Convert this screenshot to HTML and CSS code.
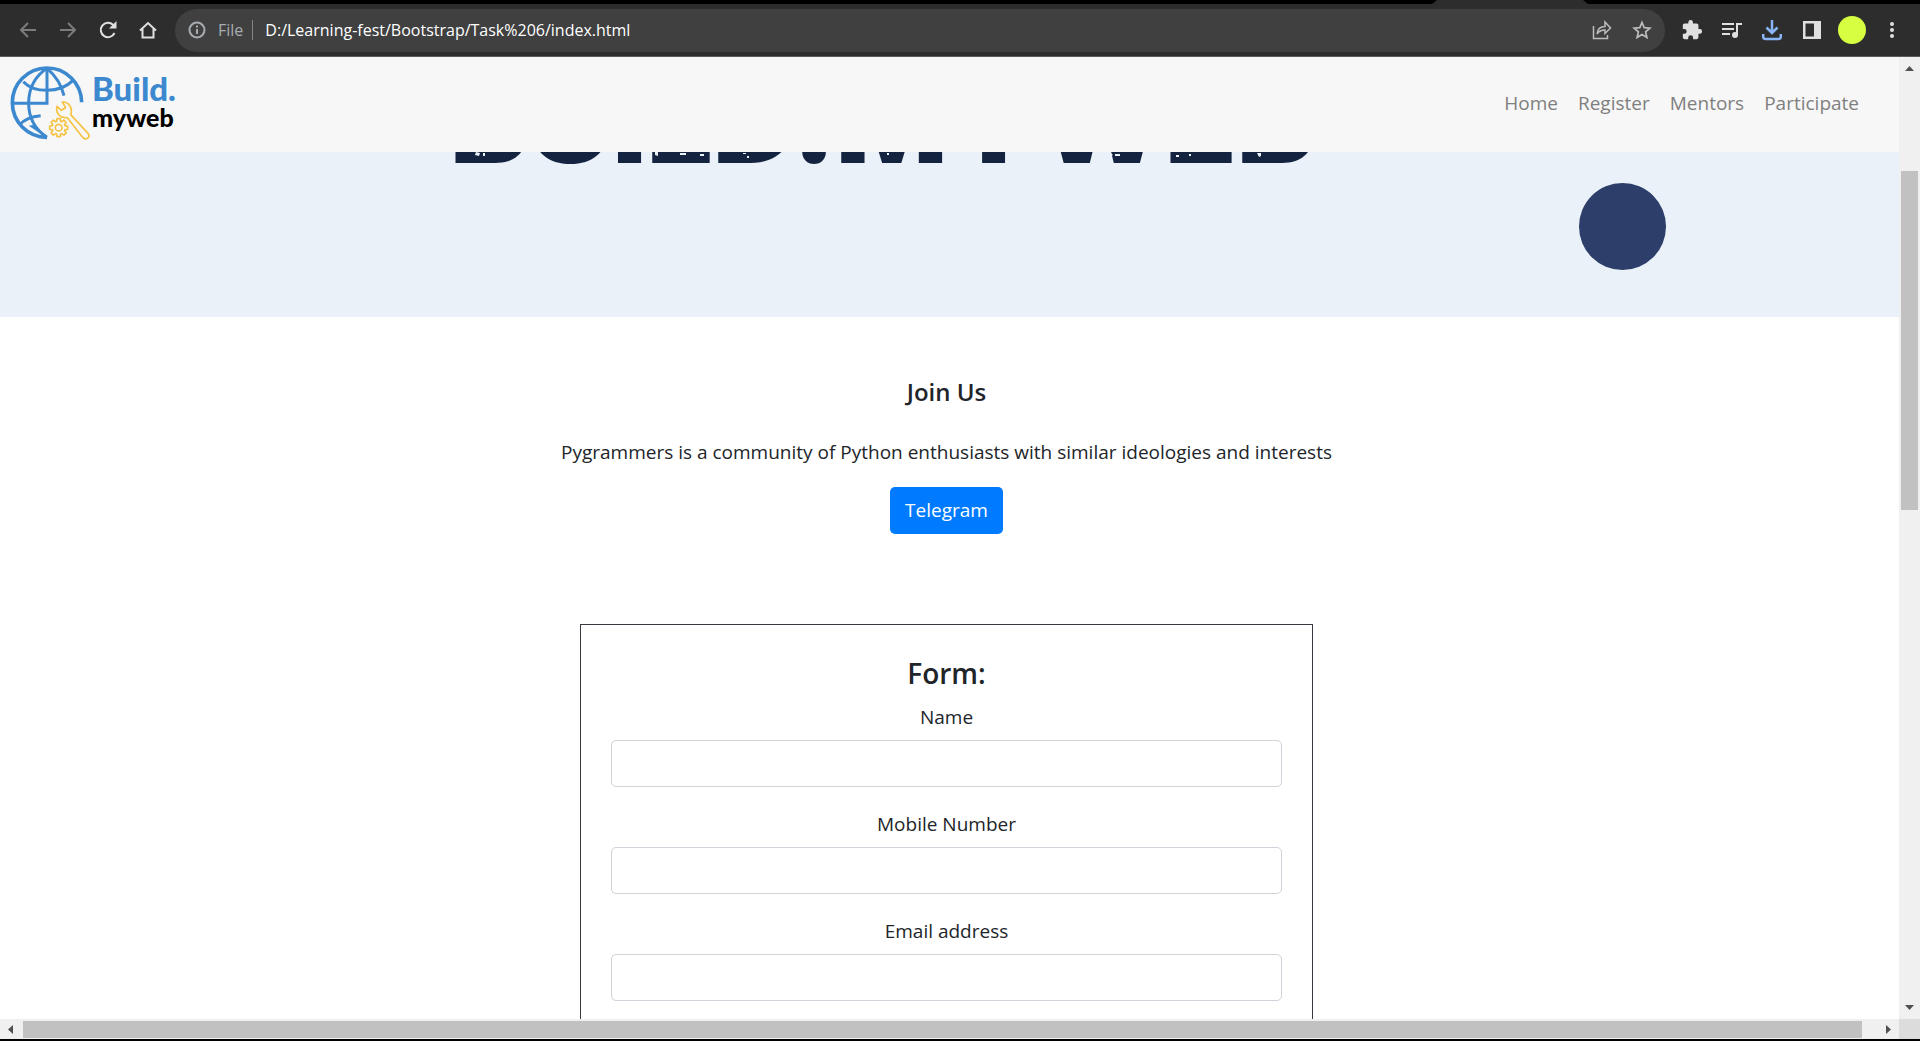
FILE: index.html
```html
<!DOCTYPE html>
<html lang="en">
<head>
<meta charset="utf-8">
<title>Build.myweb</title>
<link rel="stylesheet" href="styles.css">
</head>
<body>
<div class="window">
  <div class="tabstrip"><span class="active-tab"></span></div>
  <div class="toolbar">
    <button class="tool dim" aria-label="Back"><svg width="20" height="20" viewBox="0 0 20 20" fill="none" stroke="currentColor" stroke-width="2"><path d="M18 10H3M10 3l-7 7 7 7"/></svg></button>
    <button class="tool dim" aria-label="Forward"><svg width="20" height="20" viewBox="0 0 20 20" fill="none" stroke="currentColor" stroke-width="2"><path d="M2 10h15M10 3l7 7-7 7"/></svg></button>
    <button class="tool" aria-label="Reload"><svg width="20" height="20" viewBox="0 0 20 20" fill="none" stroke="currentColor" stroke-width="2"><path d="M16.500 13A7.200 7.200 0 1 1 15 4.800l1.500 1.500"/><path d="M18.500 1v7.500H11z" fill="currentColor" stroke="none"/></svg></button>
    <button class="tool" aria-label="Home"><svg width="20" height="20" viewBox="0 0 20 20" fill="none" stroke="currentColor" stroke-width="2"><path d="M2 10.500L10 3l8 7.500M4.500 9v8.500h11V9"/></svg></button>
    <div class="omnibox">
      <svg class="info" width="18" height="18" viewBox="0 0 18 18" fill="none" stroke="currentColor" stroke-width="2"><circle cx="9" cy="9" r="7.500"/><path d="M9 8v5M9 4.500v2"/></svg>
      <span class="scheme">File</span>
      <input class="url" type="text" aria-label="Address" value="D:/Learning-fest/Bootstrap/Task%206/index.html">
      <button class="tool soft" aria-label="Share"><svg width="20" height="20" viewBox="0 0 20 20" fill="none" stroke="currentColor" stroke-width="1.500"><path d="M1.500 6v12.500h14V15"/><path d="M5 14c.5-5 3-7.500 8-7.500V2l5.500 6-5.500 5.500V10c-3.500 0-6 1-8 4z"/></svg></button>
      <button class="tool soft" aria-label="Bookmark"><svg width="20" height="20" viewBox="0 0 20 20" fill="none" stroke="currentColor" stroke-width="1.700"><path d="M10 2.500l2.200 5.200 5.700.5-4.300 3.700 1.300 5.600-4.900-3-4.900 3 1.300-5.600L2.100 8.200l5.700-.5z"/></svg></button>
    </div>
    <button class="tool" aria-label="Extensions"><svg width="22" height="22" viewBox="0 0 24 24" fill="currentColor"><path d="M20.500 11H19V7c0-1.100-.9-2-2-2h-4V3.500a2.500 2.500 0 0 0-5 0V5H4c-1.100 0-2 .9-2 2v3.800h1.500a2.700 2.700 0 0 1 0 5.400H2V20c0 1.100.9 2 2 2h3.800v-1.500a2.700 2.700 0 0 1 5.400 0V22H17c1.100 0 2-.9 2-2v-4h1.500a2.500 2.500 0 0 0 0-5z"/></svg></button>
    <button class="tool" aria-label="Media"><svg width="22" height="20" viewBox="0 0 22 20" fill="none" stroke="currentColor" stroke-width="2"><path d="M1 4h12M1 9h12M1 14h8M16 15V4h5"/><circle cx="14" cy="15" r="3" fill="currentColor" stroke="none"/></svg></button>
    <button class="tool blue" aria-label="Downloads"><svg width="20" height="22" viewBox="0 0 20 22" fill="none" stroke="currentColor" stroke-width="2.500"><path d="M10 1v13M4.500 8.500L10 14l5.500-5.500"/><path d="M1.200 15v3c0 1.500.5 2 2 2h13.600c1.500 0 2-.5 2-2v-3"/></svg></button>
    <button class="tool" aria-label="Side panel"><svg width="20" height="20" viewBox="0 0 20 20" fill="currentColor"><path fill-rule="evenodd" d="M1 1h18v18H1zM3.500 3.500v13H12v-13z"/></svg></button>
    <button class="tool" aria-label="Profile"><span class="avatar"></span></button>
    <button class="tool" aria-label="Menu"><svg width="20" height="20" viewBox="0 0 20 20" fill="currentColor"><circle cx="10" cy="4" r="2"/><circle cx="10" cy="10" r="2"/><circle cx="10" cy="16" r="2"/></svg></button>
  </div>

  <div class="frame">
    <div class="page">
      <nav class="navbar">
        <a class="brand" href="#">
          <svg width="82" height="76" viewBox="30 30 246 228" fill="none">
            <g stroke="#3d89d0" stroke-width="9">
              <path d="M141 247A104 104 0 1 1 245 142" stroke-width="11"/>
              <path d="M141 40C102 66 86 105 86 145c0 44 20 79 55 102"/>
              <path d="M141 40c26 22 43 48 51 82"/>
              <path d="M141 40v105H36"/>
              <path d="M70 80c32 34 110 36 148-3"/>
              <path d="M58 210c14-16 36-26 64-28"/>
              <path d="M86 212l18-3 34 38z" fill="#3d89d0" stroke="none"/>
            </g>
            <g stroke="#f6c343" stroke-width="5" stroke-linejoin="round">
              <path d="M187 141c20-1 32 18 25 38l52 56c9 12-6 22-15 13l-47-60c-22 2-36-14-31-34l13 12 13-8z"/>
              <circle cx="176" cy="218" r="10"/>
              <path transform="translate(176 218)" d="M19-6l8 1V5l-8 1-1.300 3.200 4.900 6.400-7 7-6.400-4.900L6 19l-1 8H-5l-1-8-3.200-1.300-6.400 4.900-7-7 4.900-6.400L-19 6l-8-1V-5l8-1 1.300-3.200-4.900-6.400 7-7 6.400 4.900L-6-19l1-8H5l1 8 3.200 1.300 6.400-4.900 7 7-4.900 6.400z"/>
            </g>
          </svg>
          <span class="wordmark"><span class="word-top">Build.</span><span class="word-bottom">myweb</span></span>
        </a>
        <div class="nav-links">
          <a href="#">Home</a>
          <a href="#">Register</a>
          <a href="#">Mentors</a>
          <a href="#">Participate</a>
        </div>
      </nav>

      <header class="hero">
        <span class="hero-title">BUILD.MYWEB</span>
        <svg class="hero-grain" width="860" height="12" viewBox="0 0 860 12" fill="#eaf1f9">
          <path d="M22 0l4 1-1 3-4-1zM29 1h2v3h-2zM195 1h3v3h-3zM201 0h3v4l-3-1zM226 1h6v2h-6zM246 2h4v2h-4zM289 1h3v1h-3zM293 4h2v2h-2zM372 1h3v2h-3zM379 5h2v2h-2zM420 2h2v6h-2zM433 1h2v2h-2zM650 1l6-1 3 3-4 2-5-2zM661 2h5v2h-5zM642 4h2v2h-2zM703 3h3v3h-3zM711 1h5v2h-5zM722 3h3v2h-3zM735 2h2v2h-2zM803 1h4v3l-2 1z"/>
        </svg>
        <span class="hero-dot"></span>
      </header>

      <main class="content">
        <section class="join">
          <h2>Join Us</h2>
          <p>Pygrammers is a community of Python enthusiasts with similar ideologies and interests</p>
          <button class="primary">Telegram</button>
        </section>

        <form class="card">
          <h1>Form:</h1>
          <div class="field"><label for="name">Name</label><input id="name" type="text"></div>
          <div class="field"><label for="mobile">Mobile Number</label><input id="mobile" type="tel"></div>
          <div class="field"><label for="email">Email address</label><input id="email" type="email"></div>
        </form>
      </main>
    </div>

    <div class="scroll-y">
      <svg width="21" height="20" viewBox="0 0 21 20"><path d="M6 14h9l-4.500-5z"/></svg>
      <div class="track"><div class="thumb"></div></div>
      <svg width="21" height="20" viewBox="0 0 21 20"><path d="M6 6h9l-4.500 5z"/></svg>
    </div>
    <div class="scroll-x">
      <svg width="21" height="20" viewBox="0 0 21 20"><path d="M13 6v9l-5-4.500z"/></svg>
      <div class="track"><div class="thumb"></div></div>
      <svg width="21" height="20" viewBox="0 0 21 20"><path d="M8 6v9l5-4.500z"/></svg>
    </div>
    <div class="corner"></div>
  </div>
</div>
</body>
</html>
```
FILE: styles.css
```css
* { box-sizing: border-box; }

html { overflow: hidden; }

body {
  margin: 0;
  font-family: "Open Sans", "Noto Sans", sans-serif;
  font-size: 19px;
  line-height: 30px;
  color: #212529;
}

button, input { font: inherit; margin: 0; }

.window {
  display: flex;
  flex-direction: column;
  height: 100vh;
  overflow: hidden;
  background: #fff;
  border-bottom: 2px solid #000;
}

/* Browser chrome */
.tabstrip {
  flex: none;
  display: flex;
  justify-content: flex-end;
  height: 4px;
  padding-right: 332px;
  background: #000;
}
.active-tab {
  width: 156px;
  background: #2d2d2d;
  clip-path: polygon(5px 0, 151px 0, 156px 100%, 0 100%);
}

.toolbar {
  flex: none;
  display: flex;
  align-items: center;
  height: 53px;
  padding: 0 8px;
  background: #2d2d2d;
  border-bottom: 1px solid #5a5a5a;
}
.tool {
  flex: none;
  display: flex;
  align-items: center;
  justify-content: center;
  width: 40px;
  height: 40px;
  padding: 0;
  border: 0;
  background: none;
  color: #e0e0e0;
}
.tool.dim { color: #7c7c7c; }
.tool.soft { color: #bdbdbd; }
.tool.blue { color: #8ab4f8; }
.avatar {
  width: 28px;
  height: 28px;
  border-radius: 50%;
  background: #d5ff40;
}
.omnibox {
  flex: 1;
  display: flex;
  align-items: center;
  height: 43px;
  margin: 0 7px;
  padding: 0 3px 0 13px;
  border-radius: 22px;
  background: #404040;
  color: #a8acb0;
  font-size: 16px;
}
.info { margin-right: 12px; }
.scheme {
  padding-right: 9px;
  border-right: 1px solid #80868b;
  line-height: 20px;
}
.url {
  flex: 1;
  min-width: 0;
  padding: 0 0 0 12px;
  border: 0;
  outline: 0;
  background: none;
  color: #fff;
}

/* Page area and its scrollbars */
.frame {
  flex: 1;
  min-height: 0;
  display: grid;
  grid-template-columns: 1fr 21px;
  grid-template-rows: 1fr 20px;
}
.page { min-width: 0; min-height: 0; overflow: hidden; }
.scroll-y, .scroll-x { display: flex; background: #f0f0f0; fill: #505050; }
.scroll-y { flex-direction: column; }
.scroll-y svg, .scroll-x svg { flex: none; }
.track { flex: 1; }
.thumb { background: #c1c1c1; }
.scroll-y .track { padding: 94px 2px 0; }
.scroll-y .thumb { height: 41%; }
.scroll-x .track { padding: 2px 16px 1px 2px; }
.scroll-x .thumb { height: 100%; }
.corner { background: #dcdcdc; }

.navbar {
  display: flex;
  align-items: center;
  justify-content: space-between;
  height: 95px;
  padding: 0 30px 3px 10px;
  background: #f7f7f7;
}
.brand {
  display: flex;
  align-items: center;
  text-decoration: none;
  font-family: Lato, sans-serif;
  font-weight: 900;
}
.wordmark { display: flex; flex-direction: column; line-height: 29px; }
.word-top { color: #3d89d0; font-size: 33px; }
.word-bottom { color: #000; font-size: 25px; }
.nav-links { display: flex; }
.nav-links a { padding: 0 10px; color: #7f7f7f; text-decoration: none; }

.hero {
  position: relative;
  height: 165px;
  overflow: hidden;
  background: #eaf1f9;
}
.hero-title {
  position: absolute;
  left: 450px;
  bottom: 153px;
  color: #14233f;
  font-family: Inter, sans-serif;
  font-size: 117px;
  font-weight: 900;
  line-height: 86px;
}
.hero-grain {
  position: absolute;
  left: 454px;
  top: 0;
}
.hero-dot {
  position: absolute;
  right: 233px;
  top: 31px;
  width: 87px;
  height: 87px;
  border-radius: 50%;
  background: #2c3e69;
}

.content {
  display: flex;
  flex-direction: column;
  align-items: center;
  gap: 90px;
  padding: 60px 6px 0 0;
}
.join {
  display: flex;
  flex-direction: column;
  align-items: center;
  text-align: center;
}
h1, h2, p { margin: 0; }
h2 { margin-bottom: 30px; font-size: 24px; font-weight: 600; line-height: 30px; }
h1 { margin-bottom: 11px; font-size: 28px; font-weight: 600; line-height: 36px; }
.join p { margin-bottom: 20px; }
.primary {
  height: 47px;
  padding: 0 15px 2px;
  border: 0;
  border-radius: 5px;
  background: #007bff;
  color: #fff;
}
.card {
  width: 100%;
  max-width: 733px;
  padding: 30px;
  border: 1px solid #343a40;
  text-align: center;
}
.field { display: flex; flex-direction: column; gap: 8px; margin-bottom: 22px; }
.field input {
  height: 47px;
  padding: 0 15px;
  border: 1px solid #ced4da;
  border-radius: 5px;
  background: #fff;
}
```
